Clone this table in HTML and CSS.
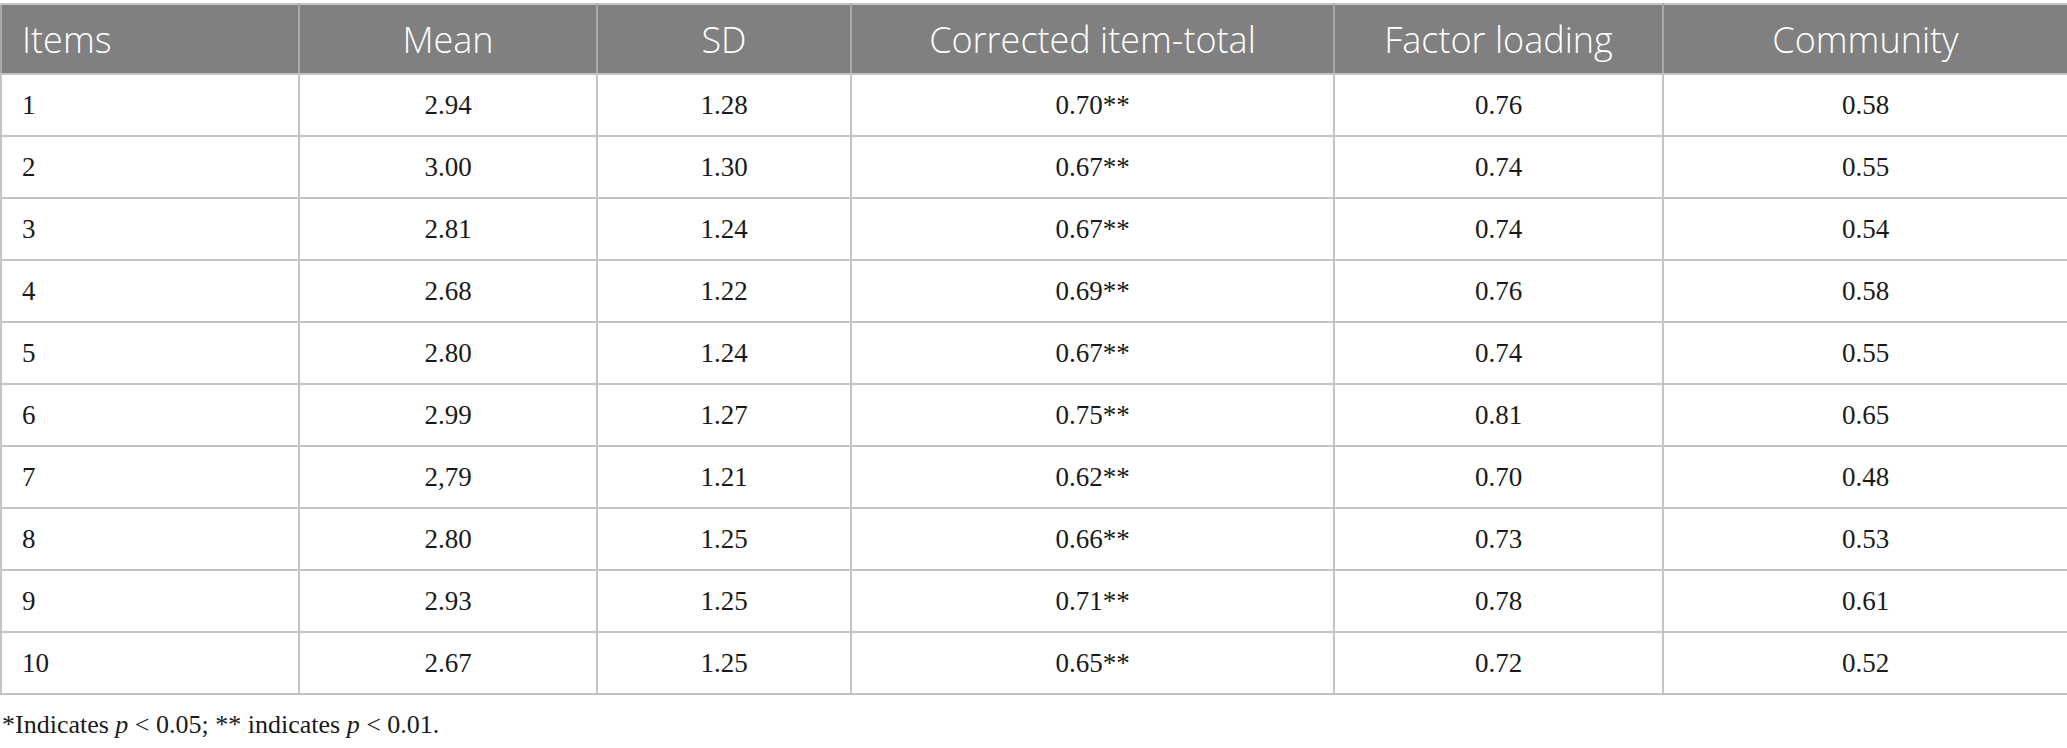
FILE: index.html
```html
<!DOCTYPE html>
<html lang="en">
<head>
<meta charset="utf-8">
<title>Item analysis</title>
<link rel="stylesheet" href="styles.css">
</head>
<body>
<div class="wrap">
<table class="data">
<colgroup>
<col class="c1"><col class="c2"><col class="c3"><col class="c4"><col class="c5"><col class="c6">
</colgroup>
<thead>
<tr>
<th class="left">Items</th>
<th>Mean</th>
<th>SD</th>
<th>Corrected item-total</th>
<th>Factor loading</th>
<th>Community</th>
</tr>
</thead>
<tbody>
<tr><td class="left">1</td><td>2.94</td><td>1.28</td><td>0.70**</td><td>0.76</td><td>0.58</td></tr>
<tr><td class="left">2</td><td>3.00</td><td>1.30</td><td>0.67**</td><td>0.74</td><td>0.55</td></tr>
<tr><td class="left">3</td><td>2.81</td><td>1.24</td><td>0.67**</td><td>0.74</td><td>0.54</td></tr>
<tr><td class="left">4</td><td>2.68</td><td>1.22</td><td>0.69**</td><td>0.76</td><td>0.58</td></tr>
<tr><td class="left">5</td><td>2.80</td><td>1.24</td><td>0.67**</td><td>0.74</td><td>0.55</td></tr>
<tr><td class="left">6</td><td>2.99</td><td>1.27</td><td>0.75**</td><td>0.81</td><td>0.65</td></tr>
<tr><td class="left">7</td><td>2,79</td><td>1.21</td><td>0.62**</td><td>0.70</td><td>0.48</td></tr>
<tr><td class="left">8</td><td>2.80</td><td>1.25</td><td>0.66**</td><td>0.73</td><td>0.53</td></tr>
<tr><td class="left">9</td><td>2.93</td><td>1.25</td><td>0.71**</td><td>0.78</td><td>0.61</td></tr>
<tr><td class="left">10</td><td>2.67</td><td>1.25</td><td>0.65**</td><td>0.72</td><td>0.52</td></tr>
</tbody>
</table>
<p class="note">*Indicates <i>p</i> &lt; 0.05; ** indicates <i>p</i> &lt; 0.01.</p>
</div>
</body>
</html>
```
FILE: styles.css
```css
html, body {
  margin: 0;
  padding: 0;
  background: #ffffff;
}

.wrap {
  padding-top: 3px;
}

.data {
  width: 2067px;
  table-layout: fixed;
  border-collapse: collapse;
  font-family: "Liberation Serif", "Times New Roman", serif;
  color: #1a1a1a;
}

.c1 { width: 298px; }
.c2 { width: 298px; }
.c3 { width: 254px; }
.c4 { width: 483px; }
.c5 { width: 329px; }
.c6 { width: 405px; }

.data th {
  background: #808080;
  color: #ffffff;
  font-family: "Open Sans", "Liberation Sans", sans-serif;
  font-weight: 300;
  font-size: 36px;
  height: 70px;
  padding: 0 20px;
  text-align: center;
  border: 2px solid #a9a9a9;
  border-top-color: #c4c4c4;
  border-bottom-color: #c4c4c4;
  box-sizing: border-box;
}

.data td {
  height: 60px;
  padding: 0 20px;
  font-size: 27px;
  text-align: center;
  border: 2px solid #c4c4c4;
}

.data .left {
  text-align: left;
}

.note {
  margin: 15px 0 0 2px;
  font-family: "Liberation Serif", "Times New Roman", serif;
  font-size: 26px;
  line-height: 30px;
  color: #1a1a1a;
}
```
